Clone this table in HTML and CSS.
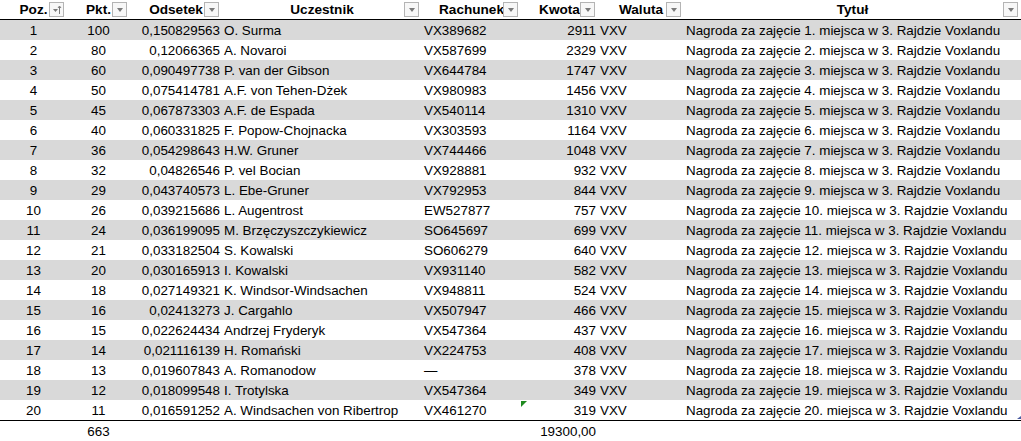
FILE: index.html
```html
<!DOCTYPE html>
<html lang="pl">
<head>
<meta charset="utf-8">
<title>Ranking</title>
<link rel="stylesheet" href="styles.css">
</head>
<body>
<div class="sheet">
  <div class="row head">
    <div class="cell c">Poz.<span class="fbtn"><svg width="13" height="13" viewBox="0 0 13 13"><path d="M3 6h5l-2.5 3z" fill="#7a7a7a"/><path d="M9.5 11V3.5" stroke="#7a7a7a" stroke-width="1"/><path d="M8 5l1.5-2 1.5 2" stroke="#7a7a7a" stroke-width="1" fill="none"/></svg></span></div>
    <div class="cell c">Pkt.<span class="fbtn"><i class="tri"></i></span></div>
    <div class="cell c">Odsetek<span class="fbtn"><i class="tri"></i></span></div>
    <div class="cell c">Uczestnik<span class="fbtn"><i class="tri"></i></span></div>
    <div class="cell c">Rachunek<span class="fbtn"><i class="tri"></i></span></div>
    <div class="cell c">Kwota<span class="fbtn"><i class="tri"></i></span></div>
    <div class="cell c">Waluta<span class="fbtn"><i class="tri"></i></span></div>
    <div class="cell c">Tytuł<span class="fbtn"><i class="tri"></i></span></div>
  </div>

  <div class="row band"><div class="cell c">1</div><div class="cell c">100</div><div class="cell r">0,150829563</div><div class="cell">O. Surma</div><div class="cell">VX389682</div><div class="cell r">2911</div><div class="cell">VXV</div><div class="cell">Nagroda za zajęcie 1. miejsca w 3. Rajdzie Voxlandu</div></div>
  <div class="row"><div class="cell c">2</div><div class="cell c">80</div><div class="cell r">0,12066365</div><div class="cell">A. Novaroi</div><div class="cell">VX587699</div><div class="cell r">2329</div><div class="cell">VXV</div><div class="cell">Nagroda za zajęcie 2. miejsca w 3. Rajdzie Voxlandu</div></div>
  <div class="row band"><div class="cell c">3</div><div class="cell c">60</div><div class="cell r">0,090497738</div><div class="cell">P. van der Gibson</div><div class="cell">VX644784</div><div class="cell r">1747</div><div class="cell">VXV</div><div class="cell">Nagroda za zajęcie 3. miejsca w 3. Rajdzie Voxlandu</div></div>
  <div class="row"><div class="cell c">4</div><div class="cell c">50</div><div class="cell r">0,075414781</div><div class="cell">A.F. von Tehen-Dżek</div><div class="cell">VX980983</div><div class="cell r">1456</div><div class="cell">VXV</div><div class="cell">Nagroda za zajęcie 4. miejsca w 3. Rajdzie Voxlandu</div></div>
  <div class="row band"><div class="cell c">5</div><div class="cell c">45</div><div class="cell r">0,067873303</div><div class="cell">A.F. de Espada</div><div class="cell">VX540114</div><div class="cell r">1310</div><div class="cell">VXV</div><div class="cell">Nagroda za zajęcie 5. miejsca w 3. Rajdzie Voxlandu</div></div>
  <div class="row"><div class="cell c">6</div><div class="cell c">40</div><div class="cell r">0,060331825</div><div class="cell">F. Popow-Chojnacka</div><div class="cell">VX303593</div><div class="cell r">1164</div><div class="cell">VXV</div><div class="cell">Nagroda za zajęcie 6. miejsca w 3. Rajdzie Voxlandu</div></div>
  <div class="row band"><div class="cell c">7</div><div class="cell c">36</div><div class="cell r">0,054298643</div><div class="cell">H.W. Gruner</div><div class="cell">VX744466</div><div class="cell r">1048</div><div class="cell">VXV</div><div class="cell">Nagroda za zajęcie 7. miejsca w 3. Rajdzie Voxlandu</div></div>
  <div class="row"><div class="cell c">8</div><div class="cell c">32</div><div class="cell r">0,04826546</div><div class="cell">P. vel Bocian</div><div class="cell">VX928881</div><div class="cell r">932</div><div class="cell">VXV</div><div class="cell">Nagroda za zajęcie 8. miejsca w 3. Rajdzie Voxlandu</div></div>
  <div class="row band"><div class="cell c">9</div><div class="cell c">29</div><div class="cell r">0,043740573</div><div class="cell">L. Ebe-Gruner</div><div class="cell">VX792953</div><div class="cell r">844</div><div class="cell">VXV</div><div class="cell">Nagroda za zajęcie 9. miejsca w 3. Rajdzie Voxlandu</div></div>
  <div class="row"><div class="cell c">10</div><div class="cell c">26</div><div class="cell r">0,039215686</div><div class="cell">L. Augentrost</div><div class="cell">EW527877</div><div class="cell r">757</div><div class="cell">VXV</div><div class="cell">Nagroda za zajęcie 10. miejsca w 3. Rajdzie Voxlandu</div></div>
  <div class="row band"><div class="cell c">11</div><div class="cell c">24</div><div class="cell r">0,036199095</div><div class="cell">M. Brzęczyszczykiewicz</div><div class="cell">SO645697</div><div class="cell r">699</div><div class="cell">VXV</div><div class="cell">Nagroda za zajęcie 11. miejsca w 3. Rajdzie Voxlandu</div></div>
  <div class="row"><div class="cell c">12</div><div class="cell c">21</div><div class="cell r">0,033182504</div><div class="cell">S. Kowalski</div><div class="cell">SO606279</div><div class="cell r">640</div><div class="cell">VXV</div><div class="cell">Nagroda za zajęcie 12. miejsca w 3. Rajdzie Voxlandu</div></div>
  <div class="row band"><div class="cell c">13</div><div class="cell c">20</div><div class="cell r">0,030165913</div><div class="cell">I. Kowalski</div><div class="cell">VX931140</div><div class="cell r">582</div><div class="cell">VXV</div><div class="cell">Nagroda za zajęcie 13. miejsca w 3. Rajdzie Voxlandu</div></div>
  <div class="row"><div class="cell c">14</div><div class="cell c">18</div><div class="cell r">0,027149321</div><div class="cell">K. Windsor-Windsachen</div><div class="cell">VX948811</div><div class="cell r">524</div><div class="cell">VXV</div><div class="cell">Nagroda za zajęcie 14. miejsca w 3. Rajdzie Voxlandu</div></div>
  <div class="row band"><div class="cell c">15</div><div class="cell c">16</div><div class="cell r">0,02413273</div><div class="cell">J. Cargahlo</div><div class="cell">VX507947</div><div class="cell r">466</div><div class="cell">VXV</div><div class="cell">Nagroda za zajęcie 15. miejsca w 3. Rajdzie Voxlandu</div></div>
  <div class="row"><div class="cell c">16</div><div class="cell c">15</div><div class="cell r">0,022624434</div><div class="cell">Andrzej Fryderyk</div><div class="cell">VX547364</div><div class="cell r">437</div><div class="cell">VXV</div><div class="cell">Nagroda za zajęcie 16. miejsca w 3. Rajdzie Voxlandu</div></div>
  <div class="row band"><div class="cell c">17</div><div class="cell c">14</div><div class="cell r">0,021116139</div><div class="cell">H. Romański</div><div class="cell">VX224753</div><div class="cell r">408</div><div class="cell">VXV</div><div class="cell">Nagroda za zajęcie 17. miejsca w 3. Rajdzie Voxlandu</div></div>
  <div class="row"><div class="cell c">18</div><div class="cell c">13</div><div class="cell r">0,019607843</div><div class="cell">A. Romanodow</div><div class="cell">—</div><div class="cell r">378</div><div class="cell">VXV</div><div class="cell">Nagroda za zajęcie 18. miejsca w 3. Rajdzie Voxlandu</div></div>
  <div class="row band"><div class="cell c">19</div><div class="cell c">12</div><div class="cell r">0,018099548</div><div class="cell">I. Trotylska</div><div class="cell">VX547364</div><div class="cell r">349</div><div class="cell">VXV</div><div class="cell">Nagroda za zajęcie 19. miejsca w 3. Rajdzie Voxlandu</div></div>
  <div class="row"><div class="cell c">20</div><div class="cell c">11</div><div class="cell r">0,016591252</div><div class="cell">A. Windsachen von Ribertrop</div><div class="cell">VX461270</div><div class="cell r warn">319</div><div class="cell">VXV</div><div class="cell corner">Nagroda za zajęcie 20. miejsca w 3. Rajdzie Voxlandu</div></div>

  <div class="row total"><div class="cell c"></div><div class="cell c">663</div><div class="cell r"></div><div class="cell"></div><div class="cell"></div><div class="cell r">19300,00</div><div class="cell"></div><div class="cell"></div></div>
</div>
</body>
</html>
```

FILE: styles.css
```css
html, body {
  margin: 0;
  padding: 0;
  background: #ffffff;
}
body {
  font-family: "Liberation Sans", Arial, sans-serif;
  font-size: 13.4px;
  color: #000000;
}
.sheet {
  width: 1021px;
}
.row {
  display: grid;
  grid-template-columns: 67px 63px 92px 200px 99px 77px 86px 337px;
  height: 20px;
  line-height: 19px;
}
.band {
  background: #d9d9d9;
}
.cell {
  position: relative;
  white-space: nowrap;
  padding: 1px 2px 0 2px;
  overflow: visible;
}
.c { text-align: center; }
.r { text-align: right; }
.head {
  height: 19px;
  line-height: 19px;
  border-bottom: 1px solid #000000;
  font-weight: bold;
  font-size: 13.6px;
}
.head .cell {
  padding: 0;
}
.fbtn {
  position: absolute;
  right: 3px;
  top: 2px;
  width: 13px;
  height: 13px;
  border: 1px solid #b4b4b4;
  background: #f7f7f7;
  display: flex;
  align-items: center;
  justify-content: center;
}
.tri {
  display: block;
  width: 0;
  height: 0;
  border-left: 3.5px solid transparent;
  border-right: 3.5px solid transparent;
  border-top: 4px solid #7a7a7a;
}
.total {
  border-top: 1px solid #000000;
}
.warn::before {
  content: "";
  position: absolute;
  left: 0;
  top: 1px;
  width: 0;
  height: 0;
  border-top: 6px solid #1f8a1f;
  border-right: 6px solid transparent;
}
.corner::after {
  content: "";
  position: absolute;
  right: 0;
  bottom: 1px;
  width: 0;
  height: 0;
  border-bottom: 3px solid #4a5ba0;
  border-left: 4px solid transparent;
}
```
